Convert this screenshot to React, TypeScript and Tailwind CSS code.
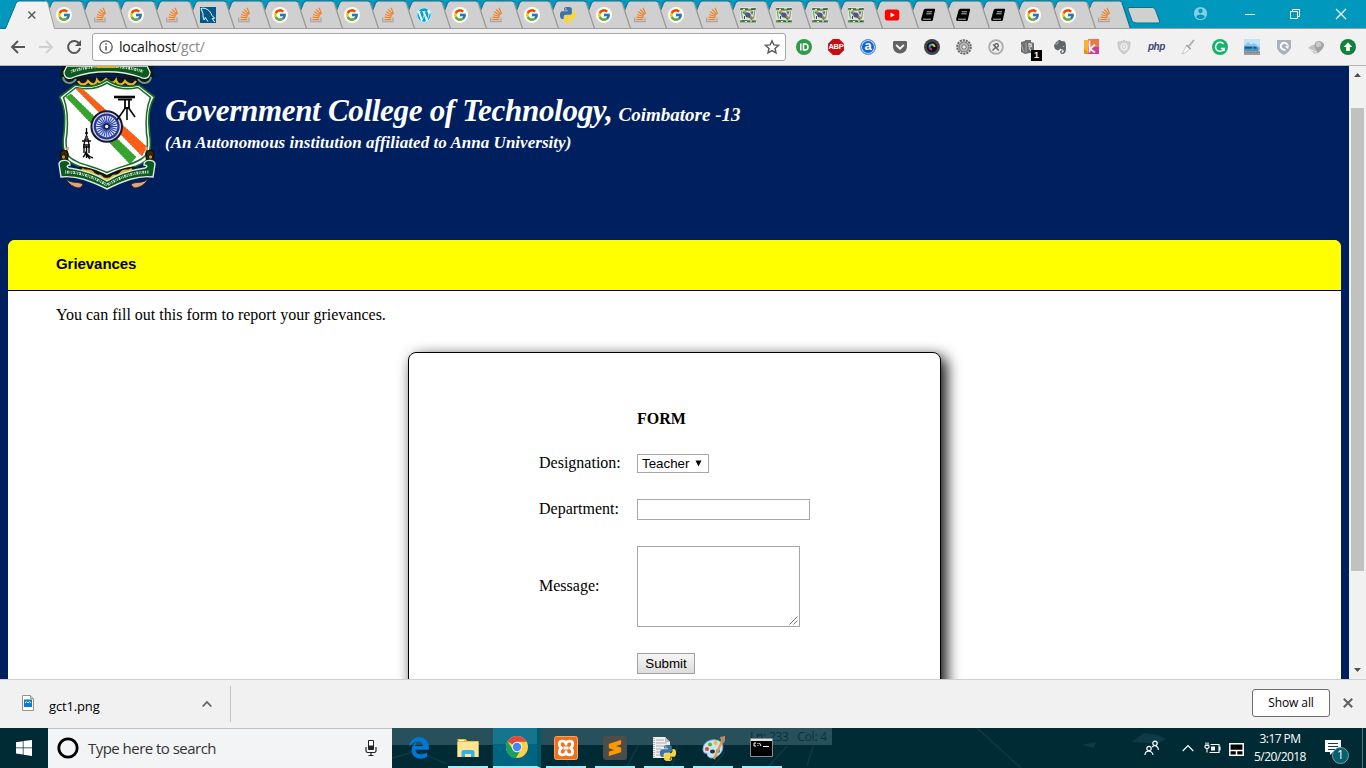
import type { ReactNode } from "react";
import { FcGoogle } from "react-icons/fc";
import { FaWordpress, FaEvernote, FaGetPocket } from "react-icons/fa";
import { SiSublimetext } from "react-icons/si";

const PY =
  "M14.25.18l.9.2.73.26.59.3.45.32.34.34.25.34.16.33.1.3.04.26.02.2-.01.13V8.5l-.05.63-.13.55-.21.46-.26.38-.3.31-.33.25-.35.19-.35.14-.33.1-.3.07-.26.04-.21.02H8.77l-.69.05-.59.14-.5.22-.41.27-.33.32-.27.35-.2.36-.15.37-.1.35-.07.32-.04.27-.02.21v3.06H3.17l-.21-.03-.28-.07-.32-.12-.35-.18-.36-.26-.36-.36-.35-.46-.32-.59-.28-.73-.21-.88-.14-1.05-.05-1.23.06-1.22.16-1.04.24-.87.32-.71.36-.57.4-.44.42-.33.42-.24.4-.16.36-.1.32-.05.24-.01h.16l.06.01h8.16v-.83H6.18l-.01-2.75-.02-.37.05-.34.11-.31.17-.28.25-.26.31-.23.38-.2.44-.18.51-.15.58-.12.64-.1.71-.06.77-.04.84-.02 1.27.05zm-6.3 1.98l-.23.33-.08.41.08.41.23.34.33.22.41.09.41-.09.33-.22.23-.34.08-.41-.08-.41-.23-.33-.33-.22-.41-.09-.41.09z";

const EDGE =
  "M25.710 228.160c.111-.162.203-.323.315-.485-.02.162-.039.323-.055.485H25.710zm460.580 15.508c0-44.032-7.754-84.465-28.801-122.405C416.498 47.879 343.912 8.001 258.893 8.001 118.962 7.724 40.617 113.214 26.026 227.675c42.429-61.312 117.073-121.376 220.375-124.966 0 0 109.666 0 99.419 104.957H169.997c6.369-37.386 18.554-58.986 34.339-78.926-75.048 34.893-121.850 96.096-120.742 188.315.83 71.448 50.124 144.836 120.743 171.976 83.357 31.847 192.776 7.200 240.132-21.324V363.307c-80.864 56.494-270.871 60.925-272.255-67.572h314.073v-52.067z";

function Python({ className }: { className: string }) {
  return (
    <svg viewBox="0 0 24 24" className={className}>
      <path d={PY} fill="#3b73a6" />
      <path d={PY} fill="#fdd43b" transform="rotate(180 12 12)" />
    </svg>
  );
}

function StackIcon() {
  return (
    <svg viewBox="0 0 16 16" className="size-4">
      <path d="M2.700 10.500v4.200h10.300V10.500" fill="none" stroke="#a9a9ad" strokeWidth="1.300" />
      <path d="M4.400 12.600h6.800M4.500 10.200l6.800.7M5.100 7.500l6.500 1.900M6.300 4.800l5.800 3.400M8.300 2.400l4.500 5M11 .7l2.600 6.100" stroke="#f48024" strokeWidth="1.200" />
    </svg>
  );
}

function MysqlIcon() {
  return (
    <svg viewBox="0 0 16 16" className="size-4">
      <path d="M0 0h16v16H0z" fill="#00598a" />
      <path d="M1 1.500c4-1.300 9 1.300 11 7l2.700 2.700-2.500.3 2.400 3.500M1 1.500c.2 2 1.600 3 2 5 0 2-.2 5 1.200 6.500l1.100-2.500 2.500 4" fill="none" stroke="#fff" strokeWidth="1" />
    </svg>
  );
}

function CrestIcon() {
  return (
    <svg viewBox="0 0 16 16" className="size-4">
      <path d="M0 0h16v16H0z" fill="#dde5d8" />
      <path d="M0 1h16v2.200H0zM0 13.200h16v2.300H0z" fill="#638559" />
      <path d="M1.500 1.500c3 2 10 2 13 0M1.500 14c3-1.500 9 2 13 0" stroke="#2f5c31" fill="none" />
      <path d="M3 2.500h2M8 1.800h3M5 14.500h2M10 14.200h2" stroke="#e8efe0" />
      <path d="M1.700 4v3.500l.8 4M14.300 4v3.500l-.8 4" stroke="#6b9a6e" strokeWidth="1" fill="none" />
      <path d="M3 5 12.500 12.500" stroke="#3b9649" strokeWidth="1.700" />
      <path d="M4.500 4 13.500 11.500" stroke="#e26b40" strokeWidth="1.200" />
      <circle cx="8" cy="8" r="2.600" fill="#4c5498" />
      <path d="M10.500 5h2.500M12 5v2.500M4.500 9v3" stroke="#444" fill="none" />
    </svg>
  );
}

function YoutubeIcon() {
  return (
    <svg viewBox="0 0 16 16" className="size-4">
      <rect x=".8" y="2.500" width="14.500" height="11" rx="2.800" fill="#f00" />
      <path d="m6.500 5.600 4.300 2.400-4.300 2.400z" fill="#fff" />
    </svg>
  );
}

function BookIcon() {
  return (
    <svg viewBox="0 0 16 16" className="size-4">
      <path d="M5.500 1.800h8.800q1 0 .8 1L12.800 13q-.3 1-1.300 1H2.800q-1.900 0-1.700-1.800L3.600 3.300q.4-1.500 1.900-1.500z" fill="#000" />
      <path d="M6.800 4.800h5.300M6.300 6.800h5.300M3 12.200h8" stroke="#d0d0d0" strokeWidth=".9" />
    </svg>
  );
}

function tabIcon(kind: string): ReactNode {
  switch (kind) {
    case "g":
      return (
        <span className="flex size-4 items-center justify-center rounded-full bg-white">
          <FcGoogle className="size-[14px]" />
        </span>
      );
    case "s":
      return <StackIcon />;
    case "m":
      return <MysqlIcon />;
    case "w":
      return (
        <span className="flex size-4 items-center justify-center rounded-full bg-white">
          <FaWordpress className="size-4 text-[#009fd4]" />
        </span>
      );
    case "p":
      return <Python className="size-4" />;
    case "c":
      return <CrestIcon />;
    case "y":
      return <YoutubeIcon />;
    default:
      return <BookIcon />;
  }
}

const TABS = "gsgsmsgsgswgsgpgsgsccccybbbggs".split("");

function TabStrip() {
  return (
    <div className="flex h-[29px] shrink-0 bg-[#0098bd] shadow-[inset_0_-1px_0_#9c9c9c]">
      <div className="z-50 flex w-[46px] shrink-0">
        <div className="relative h-[29px] w-[46px]">
          <svg viewBox="0 0 56 29" className="absolute left-0 top-0 h-[29px] w-14">
            <path d="M0 29h5.500L16 3.500Q17 1 19 1h26q2 0 3 2.500L54.500 29z" fill="#f1f1f1" />
            <path d="M0 28.500h5.500L16 3.500Q17 1 19 1h26" fill="none" stroke="#0a6f8c" />
            <path d="M45 1q2 0 3 2.500L54.500 28.500" fill="none" stroke="#9c9c9c" />
            <path d="m28.300 11.500 7 7m0-7-7 7" stroke="#5a5a5a" strokeWidth="1.500" />
          </svg>
        </div>
      </div>
      {TABS.map((k, i) => (
        <div
          key={i}
          className={`relative flex h-[29px] shrink-0 items-center justify-center pt-px ${i < 24 ? "w-9" : "w-[35.200px]"}`}
          style={{ zIndex: 40 - i }}
        >
          <svg viewBox="0 0 50 29" className="absolute -left-[5px] top-0 h-[29px] w-[50px]">
            <path d="M0 28.500 10.500 3.500Q11.500 1 13.500 1h25q2 0 3 2.500L49.500 28.500z" fill="#d0d0d0" />
            <path d="M0 28.500 10.500 3.500Q11.500 1 13.500 1h25q1.500 0 2.500 1.500" fill="none" stroke="#0a6f8c" />
            <path d="M41 2.500 49.500 28.500" fill="none" stroke={i === 29 ? "#0a6f8c" : "#979797"} strokeWidth="1.200" />
            <path d="M0 28.500h50" stroke="#9c9c9c" />
          </svg>
          <span className="relative flex">{tabIcon(k)}</span>
        </div>
      ))}
      <svg viewBox="0 0 40 29" className="ml-1 h-[29px] w-10 shrink-0">
        <path d="M3.500 7.500h24q2 0 3 2.500l4 11q.7 2-1.500 2H11q-3 0-4-2.500L3 9.500z" fill="#d0d0d0" stroke="#0a6f8c" />
      </svg>
      <div className="ml-auto flex shrink-0 items-center pb-[2px] pr-[19px]">
        <svg viewBox="0 0 16 16" className="size-[15px]">
          <circle cx="8" cy="8" r="7" fill="#85cfe2" />
          <circle cx="8" cy="5.300" r="2.300" fill="#0098bd" />
          <path d="M3.500 12c0-4 9-4 9 0-2 2.500-7 2.500-9 0z" fill="#0098bd" />
        </svg>
        <svg viewBox="0 0 12 12" className="ml-[36px] size-3"><path d="M1 6.500h10" stroke="#fff" /></svg>
        <svg viewBox="0 0 12 12" className="ml-[33px] size-3">
          <path d="M1.500 3.500h7v7h-7zM3.500 3V1.500h7v7H9" fill="none" stroke="#fff" />
        </svg>
        <svg viewBox="0 0 12 12" className="ml-[34px] size-3"><path d="m1 1 10 10M11 1 1 11" stroke="#fff" strokeWidth="1.200" /></svg>
      </div>
    </div>
  );
}

function Extensions() {
  return (
    <div className="ml-[10px] flex w-[560px] shrink-0 items-center justify-between">
      <svg viewBox="0 0 16 16" className="size-4">
        <circle cx="8" cy="8" r="8" fill="#2f9a48" />
        <path d="M4.800 4.500v7M7.500 5h1.500a3 3 0 0 1 0 6H7.500z" fill="none" stroke="#fff" strokeWidth="1.500" />
      </svg>
      <span className="flex size-4 items-center justify-center bg-[#c70d12] font-['Liberation_Sans'] text-[7.500px] font-bold leading-none tracking-[-0.200px] text-white [clip-path:polygon(30%_0,70%_0,100%_30%,100%_70%,70%_100%,30%_100%,0_70%,0_30%)]">
        ABP
      </span>
      <span className="flex size-4 items-center justify-center rounded-full border border-[#5b92e0] bg-[#1262ce] pb-[3px] font-['Liberation_Sans'] text-[13px] font-bold leading-none text-white shadow-[inset_0_0_0_1px_#cfe0f8]">
        a
      </span>
      <FaGetPocket className="size-4 text-[#616161]" />
      <svg viewBox="0 0 16 16" className="size-4">
        <circle cx="8" cy="8" r="8" fill="#40454c" />
        <circle cx="8" cy="8" r="5.200" fill="#111" />
        <path d="M5.500 8A2.500 2.500 0 0 1 8 5.500" stroke="#18b8d8" strokeWidth="2" fill="none" />
        <path d="M8 5.500A2.500 2.500 0 0 1 10.500 8" stroke="#c8cc2c" strokeWidth="2" fill="none" />
        <path d="M5.500 8A2.500 2.500 0 0 0 8 10.500" stroke="#c525a5" strokeWidth="2" fill="none" />
      </svg>
      <svg viewBox="0 0 16 16" className="size-4">
        <circle cx="8" cy="8" r="6.800" fill="none" stroke="#6a6a6a" strokeWidth="2" strokeDasharray="2.200 .85" />
        <circle cx="8" cy="8" r="5" fill="#b9b9b9" stroke="#8a8a8a" strokeWidth="1.600" />
        <circle cx="8" cy="8" r="2.200" fill="#f1f1f1" stroke="#777" />
      </svg>
      <svg viewBox="0 0 16 16" className="size-4">
        <circle cx="8" cy="8" r="6.900" fill="#ececec" stroke="#aaa" strokeWidth="1.800" />
        <circle cx="8.500" cy="6.500" r="1.800" fill="none" stroke="#555" strokeWidth="1.300" />
        <path d="m4.500 11.500 3-3 3.500 3M5 5.500l1.500 1.500" stroke="#666" strokeWidth="1.300" fill="none" />
      </svg>
      <div className="relative size-4">
        <svg viewBox="0 0 16 16" className="size-4">
          <path d="m1 3 4-1V1h6v2l3 1v9l-9 2-4-2z" fill="#707070" />
          <path d="M6 4v9M1 5l3 8" stroke="#a5a5a5" />
          <path d="M8 5h4M8 7h4M9 5c3 0 3 3 0 4l2 3" stroke="#e5e5e5" fill="none" />
        </svg>
        <span className="absolute left-[11px] top-[11px] flex h-[11px] w-[11px] items-center justify-center bg-black font-['Liberation_Sans'] text-[9px] font-bold text-white">1</span>
      </div>
      <FaEvernote className="size-4 text-[#5c666c]" />
      <svg viewBox="0 0 16 16" className="size-4">
        <path d="M0 1h5v14H0z" fill="#f7b42c" />
        <path d="M4 0h11v8H4z" fill="#ed7546" />
        <path d="M4 8h11v7H4z" fill="#cf3e91" />
        <path d="m0 9 5 6H0z" fill="#e68c25" />
        <path d="M5.500 1.500v12M11 5.500l-5 4.500 5 3.500" stroke="#fff" strokeWidth="1.700" fill="none" />
      </svg>
      <svg viewBox="0 0 16 16" className="size-4">
        <path d="M8 1c2 2 4 2 6 2 0 6-1 9-6 12C3 12 2 9 2 3c2 0 4 0 6-2z" fill="#d0d0d0" stroke="#c4c4c4" />
        <circle cx="8" cy="7.800" r="3" fill="none" stroke="#f4f4f4" strokeWidth="1.200" />
        <circle cx="8" cy="7.800" r="1.200" fill="#eee" />
      </svg>
      <span className="w-4 font-['Liberation_Sans'] text-[10px] font-bold italic leading-none tracking-[-0.500px] text-[#414978]">php</span>
      <svg viewBox="0 0 16 16" className="size-4">
        <path d="m14 1-5 6" stroke="#aaa" strokeWidth="1.800" />
        <path d="m6.500 6.500 3.500 3.500-5 4-3 1z" fill="#fafafa" stroke="#c6c6c6" />
        <path d="m6.500 6 4 4" stroke="#999" strokeWidth="1.500" />
      </svg>
      <svg viewBox="0 0 16 16" className="size-4">
        <circle cx="8" cy="8" r="8" fill="#15b36b" />
        <path d="M11.500 5A4.500 4.500 0 1 0 12.200 9.500H8.800M12.200 9v3" fill="none" stroke="#fff" strokeWidth="1.500" />
      </svg>
      <svg viewBox="0 0 16 16" className="size-4">
        <path d="M0 0h16v16H0z" fill="#c3e3f6" />
        <path d="m0 7 4-4 3 2.500L10 4l6 4v3H0z" fill="#8fc4e8" />
        <path d="M0 7h11l3.500 2v3H0z" fill="#3f97cf" />
        <path d="M1 8.300h7v1.200H1zM9.500 8.300h3v1.200h-3z" fill="#173c58" />
        <path d="M0 12h16v4H0z" fill="#a09a9c" />
        <path d="M0 13.500h16" stroke="#877e80" strokeDasharray="2 1" />
      </svg>
      <svg viewBox="0 0 16 16" className="size-4">
        <path d="M1 1h14v8c-2 4-4 5-7 7-4-2-6-4-7-7z" fill="#a9b1c1" />
        <path d="M11.500 6a3.500 3.500 0 1 0-2 4.500" fill="none" stroke="#fff" strokeWidth="2" />
        <path d="m9 7.500 4-1.500-1 4z" fill="#fff" />
      </svg>
      <svg viewBox="0 0 16 16" className="size-4">
        <path d="m0 9 4-3 5 0 4 5-6 4z" fill="#c2c2c2" />
        <path d="M6.500 5.500c1-5 8.500-4 9.500 0 0 4-3.500 6-6 9 0-3-4.500-5-3.500-9z" fill="#a3a3a3" />
        <circle cx="10.500" cy="5.500" r="2.800" fill="#c9c9c9" />
        <path d="m1 10 7 3" stroke="#eee" />
      </svg>
      <svg viewBox="0 0 16 16" className="size-4">
        <circle cx="8" cy="8" r="8" fill="#15803a" />
        <path d="m8 3.500 4.300 4.500h-2.500v4H6.200V8H3.700z" fill="#fff" />
      </svg>
    </div>
  );
}

function AddressBar() {
  return (
    <div className="flex h-[37px] shrink-0 items-center border-b border-[#b5b5b5] bg-[#f1f1f1] pl-[10px]">
      <svg viewBox="0 0 76 16" className="h-4 w-[76px] shrink-0">
        <path d="M15 8H2m6-6L2 8l6 6" fill="none" stroke="#555" strokeWidth="1.900" />
        <path d="M29 8h13m-6-6 6 6-6 6" fill="none" stroke="#d0d0d0" strokeWidth="1.900" />
        <path d="M69.300 5A6 6 0 1 0 70 9" fill="none" stroke="#555" strokeWidth="2" />
        <path d="M71 1v6h-6z" fill="#555" />
      </svg>
      <div className="ml-[6px] flex h-7 w-[694px] shrink-0 items-center rounded-[3px] border border-[#a6a6a6] bg-white pl-[6px] pr-[5px]">
        <svg viewBox="0 0 14 14" className="size-[14px]">
          <circle cx="7" cy="7" r="6.200" fill="none" stroke="#5a5a5a" strokeWidth="1.300" />
          <path d="M7 6v4.500M7 3.300v1.500" stroke="#5a5a5a" strokeWidth="1.500" />
        </svg>
        <span className="ml-[6px] font-['Open_Sans'] text-[14px] leading-5 tracking-[-0.180px] text-[#111]">
          localhost<span className="text-[#888]">/gct/</span>
        </span>
        <svg viewBox="0 0 16 16" className="ml-auto size-4">
          <path d="m8 1.800 1.900 4.100 4.500.5L11 9.500l1 4.400-4-2.300-4 2.300 1-4.400-3.400-3.100 4.500-.5z" fill="none" stroke="#5a5a5a" strokeWidth="1.400" />
        </svg>
      </div>
      <Extensions />
    </div>
  );
}

function Crest() {
  const spokes = Array.from({ length: 24 }, (_, i) => i * 15);
  return (
    <svg viewBox="0 0 102 126" className="h-[126px] w-[102px] shrink-0">
      {/* upper ribbon */}
      <path d="M20 11h62v7l-16 2-15-6-15 6-16-2z" fill="#0e1420" />
      <path d="M22 15c3 5 8 4 10 0 4 5 8 4 9-1 3 5 6 2 9-1 3 3 7 6 10 1 1 5 6 6 9 1 3 4 8 5 11 0" fill="none" stroke="#e3bb1c" strokeWidth="2.200" />
      <path d="M4 0h94l-2 4 3 6-4 3c2 5-6 8-12 3l-5-4c-18-5-36-5-54 0l-5 4c-6 5-14 2-12-3l-4-3 3-6z" fill="#0a1c18" />
      <path d="M7 11c1 7 9 8 13 2M95 11c-1 7-9 8-13 2" fill="none" stroke="#76918a" strokeWidth="2" />
      <path d="M11 0 8 6c0 6 5 8 10 5 20-7 46-7 66 0 5 3 10 1 10-5l-3-6z" fill="#0b5a20" stroke="#e6efe4" strokeWidth="1.300" />
      <path d="M15 5.500C36-1.500 66-1.500 87 5.500" fill="none" stroke="#dcebd9" strokeWidth="2.800" strokeDasharray="1 .8 2 .7 .8 .9" />
      <path d="M15 5.700C36-1.300 66-1.300 87 5.700" fill="none" stroke="#0b5a20" strokeWidth=".8" strokeDasharray="1.200 1.500" />
      <path d="M36 0h29l-7 2H43z" fill="#d9b21d" />
      {/* shield */}
      <path d="M3.500 31 19 19c12 3 23 1 32-5 9 6 20 8 32 5l15.500 12c-7 12-6 24-5 36 2 10 1 17-1 25-8 10-27 11-41.500 18C36 103 18 102 10 92c-3-8-4-15-2-25 1-12 2-24-4.500-36z" fill="#f8fff7" stroke="#1a6a2b" strokeWidth="1.600" />
      <path d="M7.500 31.500 20 21.500c12 3 22 1 31-4.500 9 5.500 19 7.500 31 4.500l12.500 10c-5 12-5 24-4 36 2 9 1 15-1 22-8 9-25 10-38.500 17-14-7-31-8-39-17-2-7-3-13-1-22 1-12 1-24-3.500-36z" fill="#fff" stroke="#1a6a2b" strokeWidth="1.500" />
      <path d="m19 22 7 .5L91 81l-5 9z" fill="#ff5d17" stroke="#3d7a3a" strokeWidth=".6" strokeDasharray="1.500 1" />
      <path d="m10 31 5-3 65 63-6 7z" fill="#36a52c" stroke="#145c20" strokeWidth=".6" strokeDasharray="1.500 1" />
      <circle cx="50.700" cy="60.500" r="15.300" fill="#d4d4dc" stroke="#15182a" strokeWidth="2" />
      <circle cx="50.700" cy="60.500" r="11.800" fill="#e8ecff" stroke="#2236a0" strokeWidth="2.300" />
      {spokes.map((a) => (
        <path key={a} d="M50.700 50v8" stroke="#2c44ac" strokeWidth="1.100" transform={`rotate(${a} 50.700 60.500)`} />
      ))}
      <circle cx="50.700" cy="60.500" r="2.500" fill="#eee" stroke="#172035" strokeWidth="1.600" />
      {/* surveying instrument and tower */}
      <g fill="none" stroke="#080808">
        <path d="M58 31h21" strokeWidth="2.600" />
        <path d="M62 33.500h14M69 34v8h4v-8" strokeWidth="1.800" />
        <path d="m70 41-9 13M71 41v13M72 41l7 10" strokeWidth="1.600" />
        <path d="M30.500 62v8M29 67h3M29 71h3M29 73l-1 6h5l-1-6z" strokeWidth="1.300" />
        <path d="M26 75h9M27 81h7M28 78v9M33 78v9M30.500 80v12M27 91c2-1 2-3 3-5 2 4 4 5 7 6M31 89l3 4" strokeWidth="1.400" />
      </g>
      {/* lower ribbon and flourishes */}
      <path d="M4 88c1-5 8-5 8 1l-1 8-6-2zM98 88c-1-5-8-5-8 1l1 8 6-2z" fill="#3a2810" stroke="#161208" strokeWidth="1.500" />
      <circle cx="7.500" cy="91" r="2.200" fill="#b8923c" stroke="#15120a" /><circle cx="94.500" cy="91" r="2.200" fill="#b8923c" stroke="#15120a" />
      <path d="m11 84 1-3M91 84l-1-3" stroke="#d9a07a" strokeWidth="2.500" />
      <path d="M23 101c8-1 17 3 28 8 11-5 20-9 28-8v6l-16 5-12 6-12-6-16-5z" fill="#111712" />
      <path d="M26 103c4 4 7 0 10 3 3 4 5 4 7 4 3-1 2 4 8 3 5 1 5-4 8-3 3 0 5-1 7-4 3-3 6 1 10-3" fill="none" stroke="#e5b61a" strokeWidth="2.600" />
      <path d="M10 113c6 5 11 2 17 5-1 3-3 4-5 4-4-1-9-3-12-9zM92 113c-6 5-11 2-17 5 1 3 3 4 5 4 4-1 9-3 12-9z" fill="#dba77f" stroke="#32251a" />
      <path d="M3 98c1-5 11-5 11 1-3 0-4 2-1 3 14 2 26 5 38 13 12-8 24-11 38-13 3-1 2-3-1-3 0-6 10-6 11-1l-2 13c-15-2-30 4-46 12-16-8-31-14-46-12z" fill="#0b5a20" stroke="#e0ebdd" strokeWidth="1.400" />
      <path d="M9 106c15 0 29 5 42 13 13-8 27-13 42-13" fill="none" stroke="#dcebd9" strokeWidth="2.800" strokeDasharray="1 .8 2 .7 .8 .9" />
      <path d="M9 106c15 0 29 5 42 13 13-8 27-13 42-13" fill="none" stroke="#0b5a20" strokeWidth=".8" strokeDasharray="1.200 1.500" />
    </svg>
  );
}

function Field({ label, children, rowClass }: { label: string; children: ReactNode; rowClass: string }) {
  return (
    <div className={`flex items-center ${rowClass}`}>
      <label className="-mt-px w-[98px] shrink-0 leading-[18px]">{label}</label>
      {children}
    </div>
  );
}

function Page() {
  return (
    <div className="flex min-h-0 flex-1 overflow-hidden bg-[#001f5f]">
      <div className="flex min-w-0 flex-1 flex-col px-2 font-['Liberation_Serif'] text-[16px] text-black">
        <header className="flex h-[174px] shrink-0 pl-12 text-white">
          <Crest />
          <div className="ml-[7px] whitespace-nowrap pt-[26px] font-bold italic">
            <h1 className="h-[39px] leading-[38px]">
              <span className="text-[31px] tracking-[-0.300px]">Government College of Technology,</span>
              <span className="ml-[6px] text-[19px]">Coimbatore -13</span>
            </h1>
            <p className="h-6 text-[17px] leading-6 tracking-[0.030px]">(An Autonomous institution affiliated to Anna University)</p>
          </div>
        </header>
        <main className="flex min-h-0 flex-1 flex-col overflow-hidden rounded-t-[7px] bg-white">
          <h2 className="h-[51px] shrink-0 border-b border-black bg-[#ffff00] pl-12 font-['Liberation_Sans'] text-[15px] font-bold leading-[48px] tracking-[-0.050px]">Grievances</h2>
          <p className="mt-[15px] h-[46px] shrink-0 pl-12 leading-[18px]">You can fill out this form to report your grievances.</p>
          <form className="mx-auto flex h-[420px] w-[533px] shrink-0 flex-col rounded-[8px] border border-black bg-white pl-[130px] pt-[57px] shadow-[5px_5px_15px_#000]">
            <h3 className="ml-[98px] h-[18px] font-bold leading-[18px]">FORM</h3>
            <Field label="Designation:" rowClass="mt-[26px] h-[19px]">
              <button type="button" className="flex h-[19px] w-[72px] items-center border border-[#a6a6a6] bg-white pl-1 font-['Liberation_Sans'] text-[13.333px]">
                Teacher
                <svg viewBox="0 0 7 7" className="ml-[6px] size-[7px] shrink-0"><path d="M.5.500h6L3.500 6.500z" fill="#000" /></svg>
              </button>
            </Field>
            <Field label="Department:" rowClass="mt-[26px] h-[21px]">
              <input aria-label="Department" className="h-[21px] w-[173px] border border-[#a6a6a6] bg-white" />
            </Field>
            <Field label="Message:" rowClass="mt-[26px] h-[81px]">
              <div className="flex h-[81px] w-[163px] items-end justify-end border border-[#a6a6a6] bg-white p-px">
                <svg viewBox="0 0 9 9" className="size-[9px]"><path d="m.5 8.500 8-8M4.500 8.500l4-4" stroke="#666" strokeWidth=".9" /></svg>
              </div>
            </Field>
            <button type="button" className="ml-[98px] mt-[26px] h-[21px] w-[58px] shrink-0 border border-[#a0a0a0] bg-gradient-to-b from-[#f6f6f6] to-[#dddddd] font-['Liberation_Sans'] text-[13.333px] leading-[19px]">
              Submit
            </button>
          </form>
        </main>
      </div>
      <div className="flex w-[17px] shrink-0 flex-col items-center justify-between bg-[#f1f1f1]">
        <svg viewBox="0 0 17 17" className="size-[17px]"><path d="m5 11 3.500-4 3.500 4z" fill="#505050" /></svg>
        <div className="mb-auto mt-[25px] h-[463px] w-[13px] bg-[#c1c1c1]" />
        <svg viewBox="0 0 17 17" className="size-[17px]"><path d="m5 6 3.500 4L12 6z" fill="#505050" /></svg>
      </div>
    </div>
  );
}

function Downloads() {
  return (
    <div className="flex h-[49px] shrink-0 border-t border-[#cfcfcf] bg-[#f1f1f1] font-['Open_Sans']">
      <div className="my-[6px] flex w-[231px] items-center border-r border-[#c4c4c4] pl-[22px]">
        <svg viewBox="0 0 12 16" className="mb-[2px] h-4 w-3">
          <path d="M.5.500h8l3 3v12H.5z" fill="#fff" stroke="#939393" />
          <path d="M8.500.500v3h3" fill="#ddd" stroke="#939393" />
          <path d="M2 4.500h8v7.500H2z" fill="#0a7ad6" />
          <path d="m3 8 1.500-1.500L6 8l1.500-1.500L9 8" stroke="#fff" fill="none" />
        </svg>
        <span className="ml-[15px] mt-[4px] text-[13px] leading-5 tracking-[-0.150px]">gct1.png</span>
        <svg viewBox="0 0 10 8" className="ml-auto mr-[18px] h-2 w-[10px]"><path d="m.7 6.500 4.300-4.500 4.300 4.500" fill="none" stroke="#606060" strokeWidth="1.800" /></svg>
      </div>
      <div className="ml-auto flex items-center pb-[2px] pr-[13px]">
        <button type="button" className="h-7 w-[78px] rounded-[3px] border border-[#6d6d6d] bg-white text-[12px] tracking-[-0.100px]">Show all</button>
        <svg viewBox="0 0 10 10" className="ml-[13px] size-[10px]"><path d="m.8.800 8.400 8.400M9.200.800.800 9.200" stroke="#606060" strokeWidth="2" /></svg>
      </div>
    </div>
  );
}

function FolderIcon() {
  return (
    <svg viewBox="0 0 24 24" className="size-6">
      <path d="M1.500 3h8l2 2h11v16h-21z" fill="#e8bd45" />
      <path d="M1.500 6h21v15h-21z" fill="#ffe592" />
      <path d="M5.500 21v-5q0-2 2-2h9q2 0 2 2v5H15v-3H9v3z" fill="#36b3e6" />
      <path d="M3 4.500h5" stroke="#fff" />
    </svg>
  );
}

function ChromeIcon() {
  return (
    <svg viewBox="0 0 24 24" className="size-6">
      <circle cx="12" cy="12" r="11" fill="#ffd146" />
      <path d="M12 12 2.500 6.500A11 11 0 0 1 21.600 6.800H12z" fill="#dd4b3e" />
      <path d="M2.500 6.400A11 11 0 0 0 11 23l5-8.500-8 0z" fill="#18a05e" />
      <circle cx="12" cy="12" r="5.200" fill="#f3f3f3" />
      <circle cx="12" cy="12" r="4.200" fill="#4587f3" />
    </svg>
  );
}

function XamppIcon() {
  return (
    <svg viewBox="0 0 24 24" className="size-6">
      <rect x=".5" y=".5" width="23" height="23" rx="2" fill="#ed711d" stroke="#f6a463" />
      <path
        d="M12 8.200C12 4 5.300 4.300 5.300 8c0 2 1 3.200 2.200 4-1.200.8-2.200 2-2.200 4 0 3.700 6.700 4 6.700-.2 0 4.200 6.700 3.900 6.700.2 0-2-1-3.200-2.200-4 1.200-.8 2.200-2 2.200-4 0-3.700-6.700-4-6.700.2zM9.500 12h5"
        fill="none"
        stroke="#fff"
        strokeWidth="2.900"
        strokeLinejoin="round"
      />
    </svg>
  );
}

function PaintIcon() {
  return (
    <svg viewBox="0 0 26 26" className="size-[26px]">
      <path d="M3 14C3 6 14 2 21 7c5 6-1 16-10 16-5-1-3-5-5-5-2 1-3-2-3-4z" fill="#c9e4f4" stroke="#7bafd0" />
      <circle cx="7" cy="14" r="2" fill="#e64334" /><circle cx="10" cy="9.500" r="2" fill="#57ad43" />
      <circle cx="15.500" cy="8" r="2" fill="#f3bd29" /><circle cx="18" cy="16" r="2" fill="#3b80ce" />
      <ellipse cx="12.500" cy="16.500" rx="2.500" ry="2" fill="#17363e" />
      <path d="m23 4-9 20" stroke="#e09a42" strokeWidth="2.200" />
      <path d="m20 2 5-1v5l-3 4z" fill="#b88c68" />
    </svg>
  );
}

const CELL = "flex h-10 w-10 shrink-0 items-center justify-center border-b-2 border-[#9deef7] pt-[1px]";

function Taskbar() {
  return (
    <div className="relative flex h-10 shrink-0 bg-[#002b35] font-['Open_Sans'] text-white">
      <svg viewBox="0 0 974 40" className="absolute left-[392px] top-0 h-10 w-[974px]">
        <path d="m0 30 25-7 30 13M170 20l8 20M246 18l-12 22M290 0l-10 39M333 24l-14 16M395 18l-20 22M423 12l-8 26M585 0l44 40" fill="none" stroke="#174650" strokeWidth="1.300" opacity=".6" />
        <path d="m740 14 12-9 14 2 8 4-8 5-14-1zM690 17l14-3-2 6z" fill="#0d3a44" />
      </svg>
      <div className="absolute left-[392px] top-0 h-[17px] w-[440px] whitespace-pre bg-[#27505a] pl-[358px] text-[12px] leading-[18px] tracking-[-0.250px] text-[#0b333d]">Ln: 233   Col: 4</div>
      <div className="flex w-12 shrink-0 items-center justify-center">
        <svg viewBox="0 0 16 16" className="size-4"><path d="m0 2.300 6.800-1v6.200H0zM7.500 1.100 16 0v7.500H7.500zM0 8.300h6.800v6.300L0 13.600zM7.500 8.300H16V16l-8.500-1.200z" fill="#fff" /></svg>
      </div>
      <div className="relative flex w-[344px] shrink-0 items-center border-t border-[#c0c0c0] bg-[#f3f4f6] px-[9px] pb-px">
        <svg viewBox="0 0 22 22" className="size-[22px]"><circle cx="11" cy="11" r="9.200" fill="none" stroke="#000" strokeWidth="2.800" /></svg>
        <span className="ml-[9px] text-[15px] leading-5 tracking-[-0.530px] text-[#333]">Type here to search</span>
        <svg viewBox="0 0 12 18" className="ml-auto mr-[6px] h-[18px] w-3">
          <path d="M3.500 1.500h5v9h-5z" fill="#fff" stroke="#222" />
          <path d="M3.500 6.500h5v4h-5z" fill="#222" />
          <path d="M1 8v4q0 1.500 2 1.500h6q2 0 2-1.500V8M6 13.500v3M3.500 16.500h5" fill="none" stroke="#222" strokeWidth="1.200" />
        </svg>
      </div>
      <div className="relative ml-[7px] flex shrink-0 gap-[9px]">
        <div className="flex h-10 w-10 items-center justify-center">
          <svg viewBox="0 0 512 512" className="size-[22px]"><path d={EDGE} fill="#0078d7" /></svg>
        </div>
        <div className={CELL}><FolderIcon /></div>
        <div className="-mx-1 flex h-10 w-12 items-center border-b-2 border-r-4 border-b-[#9deef7] border-r-[#075969] bg-gradient-to-b from-[#15758f] from-[43%] to-[#006580] to-[43%] pl-3">
          <ChromeIcon />
        </div>
        <div className={CELL}><XamppIcon /></div>
        <div className={CELL}>
          <span className="flex size-6 items-center justify-center rounded-[3px] bg-[#4c4c4c]"><SiSublimetext className="size-4 text-[#ff9800]" /></span>
        </div>
        <div className={CELL}>
          <div className="relative size-6">
            <svg viewBox="0 0 24 24" className="size-6">
              <path d="M1 1h12l5 5v16H1z" fill="#f0f0f0" /><path d="M13 1v5h5" fill="#bbb" />
              <path d="M4 4h8M4 7h11M4 10h12M4 13h5M4 16h5M4 19h5" stroke="#aaa" /><path d="M2 2v19" stroke="#777" strokeDasharray="1 1" />
            </svg>
            <Python className="absolute left-[8px] top-[9px] size-4" />
          </div>
        </div>
        <div className={CELL}><PaintIcon /></div>
        <div className={CELL}>
          <svg viewBox="0 0 24 20" className="h-5 w-6">
            <path d="M.5.500h22v18H.5z" fill="#000" stroke="#8c8c8c" />
            <path d="M1 2h21" stroke="#e4e4e4" strokeWidth="2" />
            <path d="M6 5H4v3h2M8 5v1M8 7v1M9.500 5l1.500 3M13 8.500h6" fill="none" stroke="#fff" />
          </svg>
        </div>
      </div>
      <div className="relative ml-auto flex shrink-0 items-center">
        <svg viewBox="0 0 16 16" className="size-4">
          <g fill="none" stroke="#fff" strokeWidth="1.200"><circle cx="5" cy="8.500" r="2.200" /><path d="M1 15c0-5 7-5 8 0" /><circle cx="11" cy="3.300" r="2.200" /><path d="M8 7c3-3 6-1 6.500 3" /></g>
        </svg>
        <svg viewBox="0 0 12 8" className="ml-[22px] h-2 w-3"><path d="m.7 7 5.300-5.500L11.300 7" fill="none" stroke="#fff" strokeWidth="1.200" /></svg>
        <svg viewBox="0 0 17 14" className="ml-[10px] h-[14px] w-[17px]">
          <path d="M6.500 3.500h8.500v8H5.500M16 5.500v4M1 4.500h4M1 4.500v2l2 1.500 2-1.500v-2M2 1.500v3M4 1.500v3M3 8v3.500" fill="none" stroke="#fff" strokeWidth="1.100" /><path d="M7 5.500h4v4H7z" fill="#fff" />
        </svg>
        <svg viewBox="0 0 15 13" className="ml-[8px] mt-[2px] h-[13px] w-[15px]">
          <path d="M.8.800h13.400v11.400H.8z" fill="#000" stroke="#fff" strokeWidth="1.500" />
          <path d="M1 7.500h13M7.500 8v4" stroke="#fff" strokeWidth="1.500" />
        </svg>
        <div className="ml-[6px] mr-px flex w-[60px] flex-col items-center text-[12px] leading-[18px] tracking-[-0.550px]">
          <span>3:17 PM</span><span>5/20/2018</span>
        </div>
        <div className="relative ml-[14px] mt-[1px] h-7 w-[26px]">
          <svg viewBox="0 0 18 16" className="absolute left-0 top-[5px] h-4 w-[18px]"><path d="M0 0h16v12h-8l-3 3v-3H0z" fill="#fff" /><path d="M3 3.500h10M3 6.500h10M3 9.500h7" stroke="#173d44" /></svg>
          <span className="absolute left-[7px] top-3 flex size-[17px] items-center justify-center rounded-full border border-[#71a6ae] bg-[#04606c] text-[12px] leading-none">1</span>
        </div>
        <div className="ml-[11px] mr-[3px] h-10 w-px bg-[#57747a]" />
      </div>
    </div>
  );
}

export default function App() {
  return (
    <div className="flex h-[768px] w-[1366px] flex-col overflow-hidden">
      <TabStrip />
      <AddressBar />
      <Page />
      <Downloads />
      <Taskbar />
    </div>
  );
}
